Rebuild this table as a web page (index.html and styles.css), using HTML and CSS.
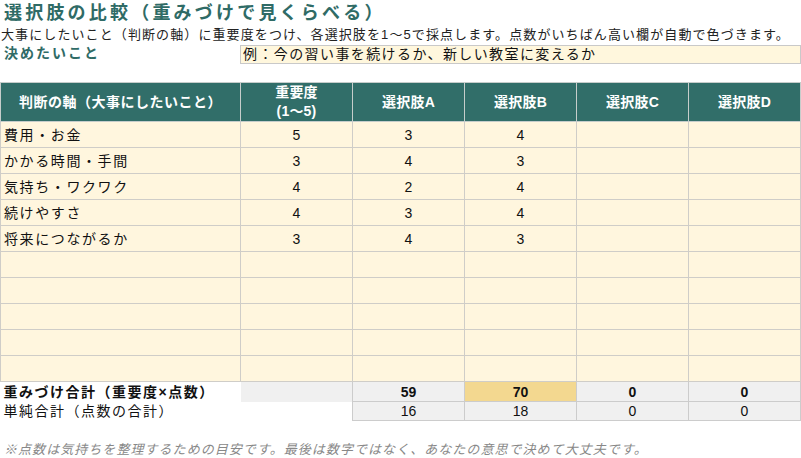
FILE: index.html
```html
<!DOCTYPE html>
<html lang="ja">
<head>
<meta charset="utf-8">
<title>選択肢の比較</title>
<link rel="stylesheet" href="styles.css">
</head>
<body>
<div class="page">
  <h1 class="title">選択肢の比較（重みづけで見くらべる）</h1>
  <p class="lead">大事にしたいこと（判断の軸）に重要度をつけ、各選択肢を1～5で採点します。点数がいちばん高い欄が自動で色づきます。</p>
  <div class="decide">
    <div class="decide-label">決めたいこと</div>
    <div class="decide-input">例：今の習い事を続けるか、新しい教室に変えるか</div>
  </div>
  <table class="grid">
    <colgroup>
      <col class="c-axis"><col class="c-num"><col class="c-num"><col class="c-num"><col class="c-num"><col class="c-num">
    </colgroup>
    <thead>
      <tr>
        <th class="th-axis">判断の軸（大事にしたいこと）</th>
        <th>重要度<br>(1～5)</th>
        <th>選択肢A</th>
        <th>選択肢B</th>
        <th>選択肢C</th>
        <th>選択肢D</th>
      </tr>
    </thead>
    <tbody class="data">
      <tr><td class="axis">費用・お金</td><td>5</td><td>3</td><td>4</td><td></td><td></td></tr>
      <tr><td class="axis">かかる時間・手間</td><td>3</td><td>4</td><td>3</td><td></td><td></td></tr>
      <tr><td class="axis">気持ち・ワクワク</td><td>4</td><td>2</td><td>4</td><td></td><td></td></tr>
      <tr><td class="axis">続けやすさ</td><td>4</td><td>3</td><td>4</td><td></td><td></td></tr>
      <tr><td class="axis">将来につながるか</td><td>3</td><td>4</td><td>3</td><td></td><td></td></tr>
      <tr><td class="axis"></td><td></td><td></td><td></td><td></td><td></td></tr>
      <tr><td class="axis"></td><td></td><td></td><td></td><td></td><td></td></tr>
      <tr><td class="axis"></td><td></td><td></td><td></td><td></td><td></td></tr>
      <tr><td class="axis"></td><td></td><td></td><td></td><td></td><td></td></tr>
      <tr><td class="axis"></td><td></td><td></td><td></td><td></td><td></td></tr>
    </tbody>
    <tbody class="totals">
      <tr class="weighted">
        <td class="t-label">重みづけ合計（重要度×点数）</td>
        <td class="t-blank"></td>
        <td class="t-val">59</td>
        <td class="t-val best">70</td>
        <td class="t-val">0</td>
        <td class="t-val">0</td>
      </tr>
      <tr class="simple">
        <td class="t-label">単純合計（点数の合計）</td>
        <td class="t-empty"></td>
        <td class="t-val">16</td>
        <td class="t-val">18</td>
        <td class="t-val">0</td>
        <td class="t-val">0</td>
      </tr>
    </tbody>
  </table>
  <p class="note">※点数は気持ちを整理するための目安です。最後は数字ではなく、あなたの意思で決めて大丈夫です。</p>
</div>
</body>
</html>
```

FILE: styles.css
```css
* { box-sizing: border-box; }

html, body {
  margin: 0;
  padding: 0;
  background: #ffffff;
}

body {
  font-family: "Liberation Sans", "Noto Sans CJK JP", sans-serif;
  color: #111111;
  width: 801px;
  height: 458px;
  overflow: hidden;
}

.page {
  display: flex;
  flex-direction: column;
}

.title {
  margin: 0;
  padding: 1px 0 0 4px;
  height: 26px;
  font-size: 18px;
  line-height: 24px;
  font-weight: 700;
  letter-spacing: 3.2px;
  color: #2f6b66;
}

.lead {
  margin: 0;
  padding-left: 1px;
  height: 18px;
  font-size: 13px;
  line-height: 18px;
  letter-spacing: 1.1px;
  color: #222222;
}

.decide {
  display: flex;
  align-items: flex-start;
  height: 38px;
}

.decide-label {
  width: 240px;
  padding: 0 0 0 4px;
  font-size: 14px;
  line-height: 18px;
  font-weight: 700;
  letter-spacing: 2px;
  color: #2f6b66;
}

.decide-input {
  flex: 1;
  margin-top: 1px;
  height: 19px;
  border: 1px solid #c9c9c9;
  background: #fff7dd;
  font-size: 14px;
  line-height: 17px;
  padding-left: 2px;
  letter-spacing: 1.4px;
  color: #111111;
}

.grid {
  border-collapse: collapse;
  table-layout: fixed;
  width: 801px;
}

.c-axis { width: 240px; }
.c-num { width: 112px; }

.grid th {
  background: #316e69;
  color: #ffffff;
  font-size: 14px;
  font-weight: 700;
  line-height: 19px;
  height: 38px;
  padding: 0;
  text-align: center;
  border: 1px solid #c6cdcb;
  letter-spacing: 0.2px;
}

.grid th.th-axis {
  letter-spacing: 0.5px;
}

.data td {
  height: 26px;
  padding: 0;
  background: #fff6de;
  border: 1px solid #cfcdc8;
  text-align: center;
  font-size: 14px;
  line-height: 24px;
  color: #111111;
}

.data td.axis {
  text-align: left;
  padding-left: 3px;
  letter-spacing: 1.6px;
}

.totals td {
  padding: 0;
  font-size: 14px;
  text-align: center;
  color: #111111;
}

.weighted td { height: 20px; line-height: 18px; }
.simple td { height: 19px; line-height: 17px; }

.totals .t-label {
  text-align: left;
  padding-left: 3px;
  letter-spacing: 1.5px;
  background: #ffffff;
  border: none;
}

.weighted .t-label { font-weight: 700; }

.totals .t-blank {
  background: #f0f0f0;
  border: none;
}

.totals .t-empty {
  background: #ffffff;
  border: none;
}

.totals .t-val {
  background: #f0f0f0;
  border: 1px solid #cccccc;
}

.weighted .t-val { font-weight: 700; }

.totals .t-val.best {
  background: #f3d890;
}

.note {
  margin: 21px 0 0 0;
  padding-left: 4px;
  font-size: 13px;
  line-height: 16px;
  font-style: italic;
  letter-spacing: 1.05px;
  color: #888888;
}
```
